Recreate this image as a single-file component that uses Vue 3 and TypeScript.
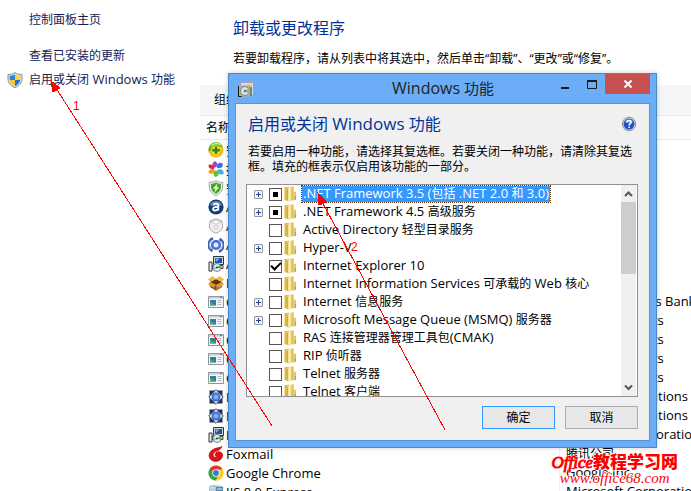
<script setup lang="ts">
import { ref } from 'vue'

interface Program { icon: string; name: string; publisher: string }
interface Feature { name: string; state: 'off' | 'on' | 'mixed'; expandable: boolean }
interface Run { text: string; latin: boolean }

const programs: Program[] = [
  { icon: 'plus', name: '安全卫士', publisher: '安全中心' },
  { icon: 'pinwheel', name: '拼图工具', publisher: '安全中心' },
  { icon: 'bolt', name: '安全杀毒', publisher: '安全中心' },
  { icon: 'letter', name: 'Amazon', publisher: 'Amazon' },
  { icon: 'shield', name: 'Antivirus', publisher: 'Antivirus' },
  { icon: 'swirl', name: 'AirSync', publisher: 'AirSync' },
  { icon: 'setup', name: 'Apex', publisher: 'Apex' },
  { icon: 'box', name: 'Box', publisher: 'Box' },
  { icon: 'app', name: 'Client', publisher: 'Business Assets Bank' },
  { icon: 'app', name: 'Client', publisher: 'Business Clients' },
  { icon: 'app', name: 'Client', publisher: 'Business Clients' },
  { icon: 'app', name: 'Client', publisher: 'Business Clients' },
  { icon: 'app', name: 'Client', publisher: 'Business Clients' },
  { icon: 'gem', name: 'Designer', publisher: 'Enterprise Solutions' },
  { icon: 'gem', name: 'Editor', publisher: 'Enterprise Solutions' },
  { icon: 'setup', name: 'Help', publisher: 'Microsoft Corporation' },
  { icon: 'fox', name: 'Foxmail', publisher: '腾讯公司' },
  { icon: 'chrome', name: 'Google Chrome', publisher: 'Google Inc.' },
  { icon: 'server', name: 'IIS 8.0 Express', publisher: 'Microsoft Corporation' },
]

const features = ref<Feature[]>([
  { name: '.NET Framework 3.5 (包括 .NET 2.0 和 3.0)', state: 'mixed', expandable: true },
  { name: '.NET Framework 4.5 高级服务', state: 'mixed', expandable: true },
  { name: 'Active Directory 轻型目录服务', state: 'off', expandable: false },
  { name: 'Hyper-V', state: 'off', expandable: true },
  { name: 'Internet Explorer 10', state: 'on', expandable: false },
  { name: 'Internet Information Services 可承载的 Web 核心', state: 'off', expandable: false },
  { name: 'Internet 信息服务', state: 'off', expandable: true },
  { name: 'Microsoft Message Queue (MSMQ) 服务器', state: 'off', expandable: true },
  { name: 'RAS 连接管理器管理工具包(CMAK)', state: 'off', expandable: false },
  { name: 'RIP 侦听器', state: 'off', expandable: false },
  { name: 'Telnet 服务器', state: 'off', expandable: false },
  { name: 'Telnet 客户端', state: 'off', expandable: false },
])
const selected = ref(0)

// Latin runs are set one size larger than the Chinese ones beside them.
function runs(text: string): Run[] {
  return (text.match(/[\x00-\x7f]+|[^\x00-\x7f]+/g) ?? []).map((t) => ({ text: t, latin: t.charCodeAt(0) < 128 }))
}
function toggle(f: Feature) {
  f.state = f.state === 'off' ? 'on' : 'off'
}
</script>

<template>
  <div class="page">
    <svg class="defs" aria-hidden="true">
      <defs>
        <linearGradient id="gFolder"><stop offset="0" stop-color="#dcbf5c" /><stop offset=".45" stop-color="#fbeea6" /><stop offset="1" stop-color="#cfab43" /></linearGradient>
        <radialGradient id="gBlue"><stop offset="0" stop-color="#a8ccff" /><stop offset="1" stop-color="#2458c8" /></radialGradient>
        <symbol id="i-uac" viewBox="0 0 16 16">
          <path d="M8 .5C6 2 3.500 2.500 1 2.500V7c0 4 3 7 7 8.700C12 14 15 11 15 7V2.500C12.500 2.500 10 2 8 .5z" fill="#d5dade" stroke="#8b969e" />
          <path d="M8 2.200C6.500 3.200 4.600 3.700 2.800 3.800V8H8z" fill="#2d83dc" /><path d="M8 2.200c1.500 1 3.400 1.500 5.200 1.600V8H8z" fill="#fbd52c" />
          <path d="M2.800 8c.3 2.800 2.500 4.800 5.200 6V8z" fill="#f9c91d" /><path d="M13.200 8c-.3 2.800-2.500 4.800-5.200 6V8z" fill="#2874cf" />
        </symbol>
        <symbol id="i-plus" viewBox="0 0 16 16">
          <circle cx="8" cy="8" r="7.600" fill="#f2ba16" /><path d="M1 5a7.600 7.600 0 0 1 14 0C10 3 5 8 .6 9.500A7 7 0 0 1 1 5z" fill="#5eb82c" /><path d="M3 4c3-3 7-3 10-1" stroke="#d4f07e" stroke-width="1.500" fill="none" />
          <circle cx="8" cy="8.300" r="4.800" fill="#f9d728" /><path d="M8 4.500v7.500M4.200 8.300h7.600" stroke="#248b25" stroke-width="2.400" />
        </symbol>
        <symbol id="i-pinwheel" viewBox="0 0 16 16">
          <path d="M7.500 7C4 6.500 3.500 2 6.500.3c3.500.5 3.500 4 1 6.700z" fill="#a343c6" /><path d="M9 7c-1-4 2.500-6.500 5.500-4.500C16 5.500 13 8 9 7z" fill="#3c6fdf" />
          <path d="M9 9c4-2 7.500 0 6.500 4C12.500 14.500 9 12.500 9 9z" fill="#45aee9" /><path d="M8 9c4 2 3.500 6-.5 7C4.500 14 5 10.500 8 9z" fill="#68bf35" />
          <path d="M7 8.500c-.5 4-4 5.500-6.500 3C.5 8.500 4 7 7 8.500z" fill="#f19a27" /><path d="M6.500 7.500C3 9 .3 7.500.5 4c3-1.300 5.500 0 6 3.500z" fill="#e32b35" /><circle cx="8" cy="8" r="1.800" fill="#fff" />
        </symbol>
        <symbol id="i-bolt" viewBox="0 0 16 16">
          <path d="M8 .5C6 2 4 2.300 1.300 2.300V7c0 4 3 7 6.700 8.600C11.700 14 14.700 11 14.700 7V2.300C12 2.300 10 2 8 .5z" fill="#f0f2ef" stroke="#9aa59c" />
          <path d="M8 2.300C6.300 3.400 4.800 3.700 3 3.800V7c0 3 2 5.200 5 6.700 3-1.500 5-3.700 5-6.700V3.800c-1.800-.1-3.300-.4-5-1.500z" fill="#4ba526" /><path d="M9.500 3.500L5 8.500h2.500l-1 4L11 7.300H8.500z" fill="#fff" />
        </symbol>
        <symbol id="i-letter" viewBox="0 0 16 16"><circle cx="8" cy="8" r="7.600" fill="#173c75" /><path d="M2 6a6.500 6.500 0 0 1 12 0C10 8 6 8 2 6z" fill="#5b87bd" /><path d="M5.300 5.700c1.500-1.500 5-1.500 5 .6v5.200M10 7.800c-3 0-5 .5-5 2.200 0 2 3.800 2 5 0" fill="none" stroke="#fff" stroke-width="1.800" /></symbol>
        <symbol id="i-shield" viewBox="0 0 16 16"><path d="M8 .7L2 3 1.300 9c1 3 4 5.500 6.700 6.300 3-1 6-3.300 6.700-6.300L14 3z" fill="#eee" stroke="#a9a9a9" /><path d="M3 4l5 2.300L13 4l-5-2z" fill="#fff" stroke="#c5c5c5" /><path d="M5.500 9c1.500-2 4-2 5 0-1 2-3.500 2-5 0z" fill="#fff" stroke="#bbb" /></symbol>
        <symbol id="i-swirl" viewBox="0 0 16 16"><circle cx="8" cy="8" r="5" fill="url(#gBlue)" /><path d="M5 1.300A7 7 0 0 0 4.500 14M11 14.700A7 7 0 0 0 11.500 2" fill="none" stroke="#3f60ac" stroke-width="2.600" /><path d="M3 3.500A7 7 0 0 0 3 12M13 12.500A7 7 0 0 0 13 4" stroke="#a4b9e4" fill="none" /><circle cx="8" cy="8" r="2.300" fill="#e8f3ff" /></symbol>
        <symbol id="i-setup" viewBox="0 0 16 16"><path d="M5.500.5h10v8h-10z" fill="#d6d6ca" stroke="#333" /><path d="M7 2h7v5H7z" fill="#174fbc" /><path d="M7.500 2.500h4L8 6z" fill="#63c4f3" /><path d="M4 9.500h11v3H4z" fill="#ddd" stroke="#444" /><path d="M1 6h3v9H1z" fill="#eee" stroke="#333" /><circle cx="9" cy="11.500" r="4" fill="#e7eef0" stroke="#555" stroke-width=".7" /><path d="M9 11.500l3-2.500a4 4 0 0 1 .8 3.500z" fill="#34b46b" /><path d="M9 11.500l-3 2.500a4 4 0 0 1-.8-3.500z" fill="#5fd3e8" /><circle cx="9" cy="11.500" r="1" fill="#333" /></symbol>
        <symbol id="i-box" viewBox="0 0 16 16"><path d="M2 7l6 3 6-3v5l-6 3.700L2 12z" fill="#8a5218" /><path d="M8 10l6-3v5l-6 3.700z" fill="#b9772b" /><path d="M2 7l6-3 6 3-6 3z" fill="#5d3510" /><path d="M0 4l5-3 3 3-6 3zM16 4l-5-3-3 3 6 3z" fill="#f3b548" /><path d="M0 9.500L2 7l6 3-2.500 2.500zM16 9.500L14 7l-6 3 2.500 2.500z" fill="#e19a31" /></symbol>
        <symbol id="i-app" viewBox="0 0 16 16"><path d="M.5 2.500h15v11H.5z" fill="#f4f7f9" stroke="#8c979f" /><path d="M1 3h14v1.700H1z" fill="#c9d3da" /><path d="M12 3.500h2" stroke="#6a7780" /><path d="M2 6h6v5.500H2z" fill="#3a78a8" /><path d="M2 8l6 3.500H2z" fill="#55ac64" /><path d="M9.500 6.500h4M9.500 8.500h4M9.500 10.500h4" stroke="#b4bdc4" /></symbol>
        <symbol id="i-gem" viewBox="0 0 16 16"><path d="M1.500 1.500h5L8 3l1.500-1.500h5v5L13 8l1.500 1.500v5h-5L8 13l-1.500 1.500h-5v-5L3 8 1.500 6.500z" fill="#1d3154" /><path d="M8 .7L15.300 8 8 15.300.7 8z" fill="#e7edf6" stroke="#34486b" /><circle cx="8" cy="8" r="4.500" fill="url(#gBlue)" /></symbol>
        <symbol id="i-fox" viewBox="0 0 16 16"><path d="M13.700.3C12.500 2 9.500 1.500 6.500 2.800 2.500 4.500.3 8 1.500 11.500c1.500 4 7 5 10.500 2.500 2.700-2 3.200-6 1.200-7.500C11 5 8 6 7.300 8c-.6 2 .8 3.200 2.900 2.200C9.500 12 5.200 12 5 9c-.2-4.500 8-3.500 8.700-8.700z" fill="#d81318" stroke="#d81318" /></symbol>
        <symbol id="i-chrome" viewBox="0 0 16 16"><circle cx="8" cy="8" r="7.500" fill="#f8cf28" /><path d="M8 8L1.500 4.250A7.500 7.500 0 0 1 14.500 4.250z" fill="#df392e" /><path d="M1.500 4.250A7.500 7.500 0 0 0 8 15.500L11 9z" fill="#35a44d" /><path d="M8 4.500h6.600A7.500 7.500 0 0 1 8 15.500L11 9z" fill="#f8cf28" /><circle cx="8" cy="8" r="3.700" fill="#fff" /><circle cx="8" cy="8" r="2.900" fill="#3c78ce" /></symbol>
        <symbol id="i-server" viewBox="0 0 16 16"><path d="M1 2l5-1 9 1v13H1z" fill="#a9c5d8" /><path d="M8 3h7v12H8z" fill="#5685aa" /><path d="M2 4h5M2 7h5M9 5h5M9 8h5" stroke="#e5f1f8" /></symbol>
        <symbol id="i-folder" viewBox="0 0 14 16"><path d="M1 1.500L6 .5V15l-5-1z" fill="#d5b653" /><path d="M1.500 2v12" stroke="#f5e29a" /><path d="M3.500 1.500l7-1.300v13.600l-5 2-2-1.300z" fill="url(#gFolder)" /><path d="M4.500 3v11.500" stroke="#bf9b38" stroke-width=".7" /><path d="M6.500 2.500V14" stroke="#fff6c4" stroke-width="1.200" /><path d="M10.500 5.500l2.500.5v8l-3.500.5 1-2z" fill="#e2c565" /><path d="M12.500 10v3.500" stroke="#5fb2e8" stroke-width="1.200" /></symbol>
        <symbol id="i-feature" viewBox="0 0 16 16"><path d="M2 0h13v2H2z" fill="#a5a0ca" /><path d="M3 2h12v12H3z" fill="#ddd8e4" /><path d="M9 3h5v5H9z" fill="#f5cf52" /><path d="M12 6h2v9h-2z" fill="#58937c" /><path d="M.5 4.500H12v11H.5z" fill="#a9b0a8" /><path d="M.5 5v10.500h3" stroke="#111" fill="none" /><circle cx="7" cy="10" r="4.500" fill="#dfe3df" stroke="#7c8580" /><path d="M7 10l3.500-3a4.300 4.300 0 0 1 0 6z" fill="#a3b1a8" /><circle cx="7" cy="10" r="1.300" fill="#6a736e" /></symbol>
      </defs>
    </svg>

    <nav class="side">
      <a class="home" href="#">控制面板主页</a>
      <a href="#">查看已安装的更新</a>
      <a class="with-icon" href="#"><svg class="icon"><use href="#i-uac" /></svg>
        <span><span v-for="(r, i) in runs('启用或关闭 Windows 功能')" :key="i" :class="{ latin: r.latin }">{{ r.text }}</span></span></a>
    </nav>

    <main class="main">
      <header class="intro">
        <h1>卸载或更改程序</h1>
        <p>若要卸载程序，请从列表中将其选中，然后单击<span class="q">“</span>卸载<span class="q">”</span>、<span class="q">“</span>更改<span class="q">”</span>或<span class="q">“</span>修复<span class="q">”</span>。</p>
      </header>
      <div class="toolbar"><button type="button">组织</button></div>
      <table class="programs">
        <thead><tr><th class="name">名称</th><th></th></tr></thead>
        <tbody>
          <tr v-for="(p, i) in programs" :key="i">
            <td><div class="program"><svg class="icon"><use :href="'#i-' + p.icon" /></svg><span class="latin">{{ p.name }}</span></div></td>
            <td class="publisher"><span :class="{ latin: p.publisher.charCodeAt(0) < 128 }">{{ p.publisher }}</span></td>
          </tr>
        </tbody>
      </table>
    </main>

    <section class="dialog" role="dialog" aria-labelledby="dialog-title">
      <div class="titlebar">
        <svg class="icon app-icon"><use href="#i-feature" /></svg>
        <h2 id="dialog-title"><span class="big">Windows</span> 功能</h2>
        <div class="controls">
          <button type="button" aria-label="最小化"><svg width="10" height="12"><path d="M1 10h8" stroke="#1b1b1b" stroke-width="2" /></svg></button>
          <button type="button" aria-label="最大化"><svg width="10" height="12"><path d="M.5 3v7.500h9V3" fill="none" stroke="#1b1b1b" /><path d="M0 3h10" stroke="#1b1b1b" stroke-width="2" /></svg></button>
          <button class="close" type="button" aria-label="关闭"><svg width="8" height="8"><path d="M.5.5l7 7M7.500.5l-7 7" stroke="#fff" stroke-width="2" /></svg></button>
        </div>
      </div>
      <div class="client">
        <div class="heading">
          <h3>启用或关闭 <span class="big">Windows</span> 功能</h3>
          <button class="help" type="button" aria-label="帮助"><svg width="16" height="16" viewBox="0 0 16 16"><circle cx="8" cy="8" r="6.700" fill="#dce0e8" stroke="#858b98" /><circle cx="8" cy="8" r="5.500" fill="#2450bf" /><path d="M3.500 6a5 5 0 0 1 9 0c-3 1.500-6 1.500-9 0z" fill="#7198e6" /><path d="M6 6.300c0-2.600 4.200-2.400 4.100 0C10 7.700 8.200 7.700 8.200 9.400M8.200 10.500v1.500" fill="none" stroke="#fff" stroke-width="1.500" /></svg></button>
        </div>
        <p class="hint">若要启用一种功能，请选择其复选框。若要关闭一种功能，请清除其复选<br />框。填充的框表示仅启用该功能的一部分。</p>
        <div class="tree">
          <ul>
            <li v-for="(f, i) in features" :key="f.name" :class="{ selected: i === selected }">
              <span class="twisty"><button v-if="f.expandable" type="button" aria-label="展开"></button></span>
              <input :id="'f' + i" type="checkbox" :checked="f.state === 'on'" :indeterminate.prop="f.state === 'mixed'" @change="toggle(f)" />
              <svg class="folder"><use href="#i-folder" /></svg>
              <label :for="'f' + i" @click="selected = i"><span v-for="(r, j) in runs(f.name)" :key="j" :class="{ latin: r.latin }">{{ r.text }}</span></label>
            </li>
          </ul>
          <div class="scrollbar">
            <svg width="15" height="17"><path d="M4 11l3.500-3.500L11 11" fill="none" stroke="#555" stroke-width="2" /></svg>
            <div class="thumb"></div>
            <svg class="down" width="15" height="17"><path d="M4 6.500L7.500 10 11 6.500" fill="none" stroke="#555" stroke-width="2" /></svg>
          </div>
        </div>
        <div class="actions"><button class="primary" type="button">确定</button><button type="button">取消</button></div>
      </div>
    </section>

    <svg class="marks" width="691" height="491" aria-hidden="true">
      <g stroke="#f00" fill="#f00" shape-rendering="crispEdges">
        <path d="M54 85L272 426M320 198L445 430" fill="none" />
        <path d="M51 81l9 7-7 4zM318 193l9 9-8 3z" />
      </g>
      <g class="step"><text x="73" y="110">1</text><text x="351" y="251">2</text></g>
    </svg>

    <div class="brand"><div><i>Office</i><b>教程学习网</b></div><i class="url">www.office68.com</i></div>
  </div>
</template>

<style>
body { overflow: hidden; background: #fff; }
</style>

<style scoped>
* { box-sizing: border-box; }
.page { position: relative; display: grid; grid-template-columns: 200px 1fr; height: 100vh; overflow: hidden; font: 12px/18px "Open Sans", "Noto Sans CJK SC", sans-serif; color: #000; }
.defs { position: absolute; width: 0; height: 0; }
h1, h2, h3, p, ul { margin: 0; padding: 0; font-weight: 400; }
button { font: inherit; color: inherit; padding: 0; border: 0; background: none; }
.latin { font-size: 13px; }
.icon { width: 16px; height: 16px; flex: none; }
.side { display: flex; flex-direction: column; padding: 11px 0 0 29px; }
.side a { color: #151c55; text-decoration: none; white-space: nowrap; line-height: 18px; }
.side .home { margin-bottom: 18px; }
.side .with-icon { display: flex; align-items: center; gap: 6px; margin: 5px 0 0 -22px; }
.main { min-width: 0; }
.intro { padding: 16px 0 0 33px; height: 85px; white-space: nowrap; }
.intro h1 { font-size: 16px; line-height: 24px; color: #039; }
.intro p { margin-top: 10px; }
.toolbar { height: 31px; padding: 0 14px; display: flex; align-items: center; background: #f5f6f8; border-bottom: 1px solid #e5e8ee; }
.programs { width: 100%; table-layout: fixed; border-collapse: separate; border-spacing: 0; }
.programs th { height: 24px; padding: 0 6px; text-align: left; font-weight: 400; background: #fcfcfd; border-bottom: 1px solid #deebf8; }
.programs .name { width: 359px; }
.programs td { height: 19px; padding: 0 0 0 8px; line-height: 18px; white-space: nowrap; overflow: hidden; }
.programs .publisher { padding-left: 6px; border-left: 1px solid #edf2fb; }
.program { display: flex; align-items: center; gap: 2px; }
.dialog { position: absolute; left: 228px; top: 73px; width: 429px; padding: 0 6px 6px; background: #6badf6; border: 1px solid #4b88c7; box-shadow: 0 0 5px rgba(0, 0, 0, .2); }
.titlebar { position: relative; display: flex; align-items: center; height: 29px; }
.app-icon { margin-left: 3px; }
.titlebar h2 { flex: 1; padding-left: 138px; font-size: 15px; line-height: 29px; color: #222; white-space: nowrap; }
.big { font-size: 16px; }
.controls { display: flex; align-self: flex-start; height: 20px; }
.controls button { width: 27px; display: grid; place-items: center; }
.controls .close { width: 45px; background: #c75050; }
.client { padding: 9px 11px 11px; background: #f0f0f0; border: 1px solid #5b93cf; }
.heading { display: flex; justify-content: space-between; align-items: center; height: 22px; padding: 0 1px; }
.heading h3 { font-size: 16px; line-height: 22px; color: #039; }
.heading .big { font-size: 17px; }
.help { width: 16px; height: 16px; display: grid; }
.hint { margin: 9px 0 10px 1px; line-height: 15px; white-space: nowrap; }
.tree { display: flex; height: 213px; margin: 0 0 0 -1px; background: #fff; border: 1px solid #919191; }
.tree ul { flex: 1; min-width: 0; overflow: hidden; list-style: none; }
.tree li { display: flex; align-items: center; height: 18px; padding-left: 7px; }
.twisty { width: 15px; display: flex; flex: none; }
.twisty button { width: 9px; height: 9px; border: 1px solid #989898; border-radius: 1px; background: linear-gradient(#27408b, #27408b) center / 5px 1px no-repeat, linear-gradient(#27408b, #27408b) center / 1px 5px no-repeat, #f4f4f4; }
.tree input { appearance: none; width: 13px; height: 13px; margin: 0; flex: none; background: #fff; border: 1px solid #555; display: grid; place-items: center; }
.tree input:indeterminate::after { content: ""; width: 5px; height: 5px; background: #000; }
.tree input:checked::after { content: ""; width: 8px; height: 4px; border: solid #000; border-width: 0 0 2px 2px; transform: translateY(-1px) rotate(-45deg); }
.folder { width: 14px; height: 16px; flex: none; margin: 0 4px 0 1px; }
.tree label { padding: 0 1px; border: 1px solid transparent; line-height: 15px; height: 18px; white-space: nowrap; }
.tree .selected label { color: #fff; background: #39f padding-box; border: 1px dotted #5a2c00; background-color: #39f; }
.scrollbar { width: 15px; margin-right: 1px; display: flex; flex-direction: column; background: #f0f0f0; }
.thumb { height: 72px; background: #cdcdcd; }
.down { margin-top: auto; }
.actions { display: flex; justify-content: flex-end; gap: 10px; padding: 9px 0 0; }
.actions button { width: 73px; height: 23px; border: 1px solid #acacac; background: #e7e7e7; }
.actions .primary { border-color: #39f; }
.marks { position: absolute; left: 0; top: 0; pointer-events: none; }
.step { fill: #f00; font: 12px "Liberation Sans", sans-serif; }
.brand { position: absolute; right: 13px; bottom: 6px; color: #f00; text-align: center; white-space: nowrap; line-height: 16px; font-family: "Liberation Serif", "Noto Sans CJK SC", serif; text-shadow: 1px 0 #fff, -1px 0 #fff, 0 1px #fff, 0 -1px #fff; }
.brand div { font-size: 17px; }
.brand i { font-weight: 400; -webkit-text-stroke: 1px #f00; }
.brand b { font-weight: 900; }
.brand .url { display: block; font-size: 15px; line-height: 14px; -webkit-text-stroke: 0; font-weight: 400; }
</style>
